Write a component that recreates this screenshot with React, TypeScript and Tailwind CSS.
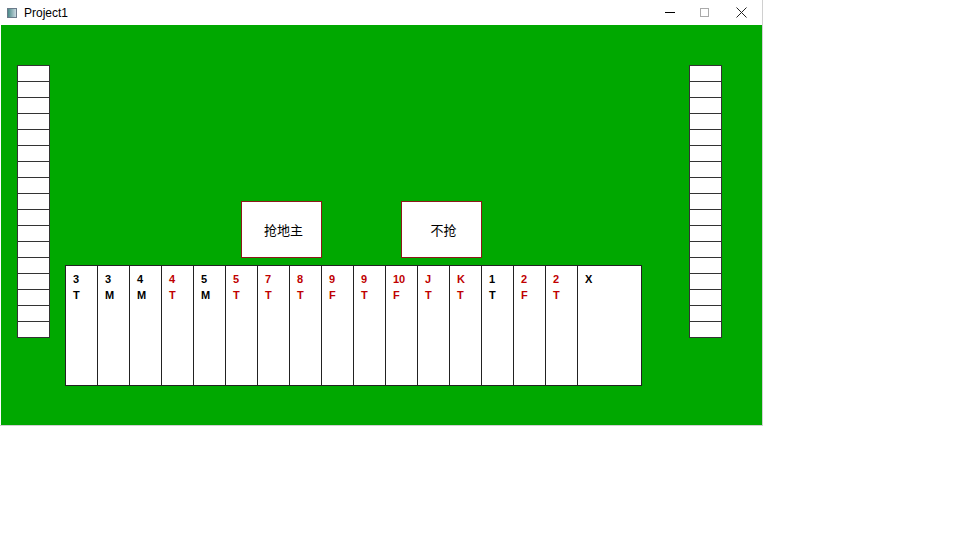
import React from 'react';

type Card = { rank: string; suit?: string; red?: boolean; wide?: boolean };

const cards: Card[] = [
  { rank: '3', suit: 'T' },
  { rank: '3', suit: 'M' },
  { rank: '4', suit: 'M' },
  { rank: '4', suit: 'T', red: true },
  { rank: '5', suit: 'M' },
  { rank: '5', suit: 'T', red: true },
  { rank: '7', suit: 'T', red: true },
  { rank: '8', suit: 'T', red: true },
  { rank: '9', suit: 'F', red: true },
  { rank: '9', suit: 'T', red: true },
  { rank: '10', suit: 'F', red: true },
  { rank: 'J', suit: 'T', red: true },
  { rank: 'K', suit: 'T', red: true },
  { rank: '1', suit: 'T' },
  { rank: '2', suit: 'F', red: true },
  { rank: '2', suit: 'T', red: true },
  { rank: 'X', wide: true },
];

//face-down pile on each side
const Pile = () => (
  <div className="flex flex-col w-[33px] border border-[#333] bg-white">
    {Array.from({ length: 17 }).map((_, i) => (
      <div key={i} className={i < 16 ? 'h-[16px] border-b border-[#333]' : 'h-[15px]'} />
    ))}
  </div>
);

const Choice = ({ label }: { label: string }) => (
  <div className="w-[81px] h-[57px] border border-[#8b1a1a] bg-white flex items-center justify-center pl-[4px] text-[13px] text-black font-['Noto_Sans_CJK_SC',sans-serif]">
    {label}
  </div>
);

export default function App() {
  return (
    <div className="w-[953px] h-[533px] bg-white font-['Liberation_Sans',sans-serif]">
      <div className="w-[763px] border-r border-b border-[#d0d0d0]">
        {/* title bar */}
        <div className="h-[25px] flex items-center bg-white">
          <div className="ml-[7px] w-[10px] h-[10px] border border-[#6a7a8a] bg-gradient-to-r from-[#4a8a8a] to-[#c8d8e0]" />
          <span className="ml-[7px] text-[12px] text-black">Project1</span>
          <div className="ml-auto flex items-center h-full">
            <div className="w-[46px] flex justify-center"><div className="w-[10px] h-px bg-black" /></div>
            <div className="w-[23px] flex justify-center"><div className="w-[9px] h-[9px] border border-[#aaa]" /></div>
            <div className="w-[46px] flex justify-center pl-[5px]">
              <svg width="11" height="11" viewBox="0 0 11 11"><path d="M0.5 0.5 L10.5 10.5 M10.5 0.5 L0.5 10.5" stroke="#222" strokeWidth="1" /></svg>
            </div>
          </div>
        </div>
        {/* table */}
        <div className="ml-px w-[761px] h-[400px] bg-[#00a800] flex items-start pl-[16px] pt-[40px]">
          <Pile />
          <div className="ml-[15px] flex flex-col">
            <div className="mt-[136px] ml-[176px] flex gap-[79px]">
              <Choice label="抢地主" />
              <Choice label="不抢" />
            </div>
            <div className="mt-[7px] flex">
              {cards.map((c, i) => (
                <div
                  key={i}
                  className={`h-[121px] border border-[#222] bg-white pl-[7px] pt-[5px] text-[11px] font-bold leading-[16px] ${c.wide ? 'w-[65px]' : 'w-[33px]'} ${i > 0 ? '-ml-px' : ''} ${c.red ? 'text-[#c00000]' : 'text-black'}`}
                >
                  <div>{c.rank}</div>
                  {c.suit && <div>{c.suit}</div>}
                </div>
              ))}
            </div>
          </div>
          <div className="ml-[47px]">
            <Pile />
          </div>
        </div>
      </div>
    </div>
  );
}
